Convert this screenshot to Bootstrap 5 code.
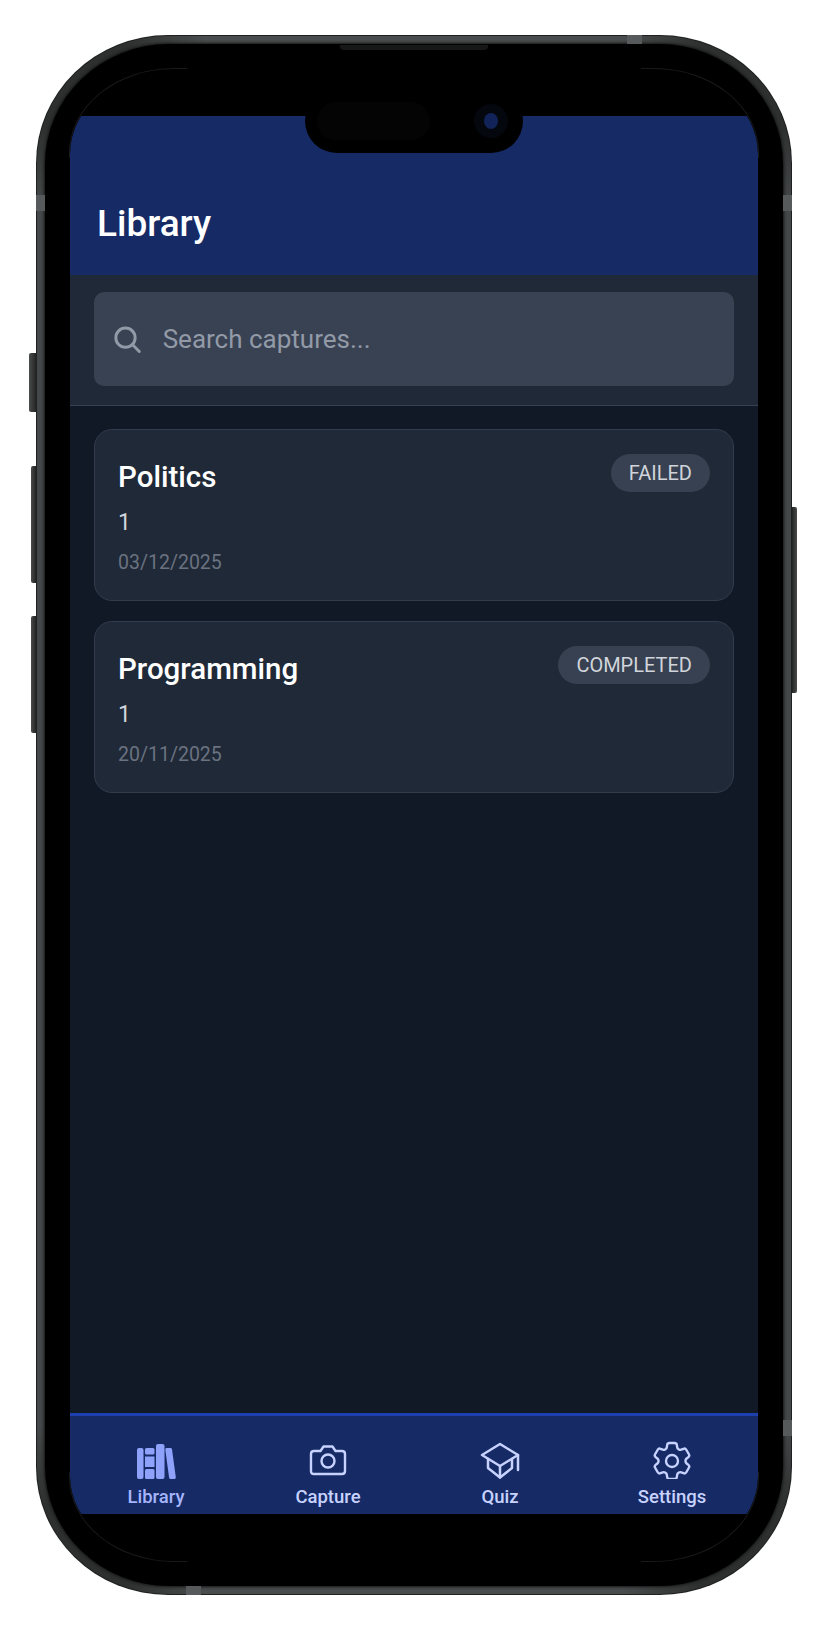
<!DOCTYPE html>
<html lang="en">
<head>
    <meta charset="UTF-8">
    <meta name="viewport" content="width=device-width, initial-scale=1.0">
    <title>Library</title>
    <link href="https://cdn.jsdelivr.net/npm/bootstrap@5.3.0/dist/css/bootstrap.min.css" rel="stylesheet">
    <style>
        html, body { height: 1631px; overflow: hidden; background: #fff; }
        body { font-family: Roboto, "Liberation Sans", sans-serif; padding: 35px 36px 0; }

        /* phone body: metal ring is lighter on the straight edges, darker round the corners */
        .phone-frame {
            position: relative; width: 756px; height: 1560px; padding: 9px;
            border-radius: 132px / 128px;
            background-color: #2e3030;
            background-image:
                linear-gradient(90deg, transparent 90px, #4a4d4d 170px, #4a4d4d 586px, transparent 666px),
                linear-gradient(180deg, transparent 90px, #454848 170px, #454848 1390px, transparent 1470px);
            box-shadow: inset 0 0 0 1px #1f2020;
        }
        .phone-bezel { height: 100%; padding: 25px; border-radius: 124px / 120px; background: #000; box-shadow: 0 0 3px 1px #141515; }
        .side-btn { position: absolute; background: linear-gradient(90deg, #4a4c4c, #232525); border-radius: 2px 0 0 2px; }
        .btn-action { left: -7px; top: 318px; width: 7px; height: 59px; }
        .btn-up { left: -5px; top: 431px; width: 5px; height: 117px; }
        .btn-down { left: -5px; top: 581px; width: 5px; height: 117px; }
        .btn-power { right: -5px; top: 472px; width: 5px; height: 186px; border-radius: 0 2px 2px 0; background: linear-gradient(90deg, #232525, #4a4c4c); }
        .band { position: absolute; background: #565a5a; }
        .band-l { left: 0; top: 160px; width: 9px; height: 16px; }
        .band-r { right: 0; top: 160px; width: 9px; height: 16px; }
        .band-t { left: 591px; top: 0; width: 15px; height: 9px; }
        .band-b { left: 150px; bottom: 0; width: 15px; height: 9px; }
        .band-rb { right: 0; top: 1385px; width: 9px; height: 16px; }
        .speaker { position: absolute; left: 304px; top: 10px; width: 148px; height: 5px; background: #161717; border-radius: 0 0 4px 4px; }

        /* screen */
        .phone-screen { width: 688px; height: 1492px; border-radius: 105px / 85px; overflow: hidden; background: #000; }
        .status-gap { height: 47px; background: #000; }
        .island { position: absolute; left: 269px; top: 54px; width: 218px; height: 64px; border-radius: 32px; background: #000; }
        .island-pill { width: 113px; height: 38px; margin-left: 12px; border-radius: 19px; background: #040404; }
        .island-cam { width: 34px; height: 34px; margin-right: 15px; border-radius: 50%; background: #05070e; }
        .island-lens { width: 14px; height: 16px; border-radius: 50%; background: #12235a; }
        .corner-arc { position: absolute; width: 118px; height: 90px; border: 0 solid #191919; }
        .arc-tl { left: 33px; top: 33px; border-width: 1px 0 0 1px; border-top-left-radius: 105px 85px; }
        .arc-tr { right: 33px; top: 33px; border-width: 1px 1px 0 0; border-top-right-radius: 105px 85px; }
        .arc-bl { left: 33px; bottom: 33px; border-width: 0 0 1px 1px; border-bottom-left-radius: 105px 85px; }
        .arc-br { right: 33px; bottom: 33px; border-width: 0 1px 1px 0; border-bottom-right-radius: 105px 85px; }

        .app-header { height: 159px; padding: 0 27px 29px; background: #162a66; }
        .app-title { font-size: 37px; font-weight: 500; line-height: 44px; color: #fff; margin: 0; }
        .search-bar { height: 131px; padding: 17px 24px 0; background: #1f2937; border-bottom: 1px solid #374151; }
        .search-box { height: 94px; padding: 0 20px; gap: 22px; border-radius: 10px; background: #394252; }
        .search-box .form-control { padding: 0; border: 0; border-radius: 0; background: transparent; box-shadow: none; color: #fff; font-size: 26px; }
        .search-box .form-control::placeholder { color: #929aa8; opacity: 1; }
        .capture-list { padding: 23px 24px 0; gap: 20px; background: #111927; }
        .capture-card { height: 172px; padding: 24px 23px; border: 1px solid #323c4c; border-radius: 18px; background: #1f2937; }
        .capture-title { font-size: 29.500px; font-weight: 500; line-height: 46px; color: #fff; margin: 0; }
        .capture-count { font-size: 23px; line-height: 32px; margin-top: 7px; color: #d1d5db; }
        .capture-date { font-size: 19.500px; line-height: 26px; margin-top: 11px; color: #6b7280; }
        .status-pill { padding: 0 18px; font-size: 20px; font-weight: 400; line-height: 38px; background: #374151; color: #d1d5db; }
        .tab-bar { height: 101px; background: #162a66; border-top: 3px solid #1e40af; }
        .tab-item { flex: 1 1 0; height: 100%; padding-top: 25px; color: #c7d2fe; font-size: 18.500px; font-weight: 500; line-height: 22px; text-decoration: none; }
        .tab-item.is-active { color: #a5b4fc; }
        .tab-icon { display: block; height: 38px; margin-bottom: 7px; }
    </style>
</head>
<body>
    <div class="phone-frame">
        <span class="side-btn btn-action"></span>
        <span class="side-btn btn-up"></span>
        <span class="side-btn btn-down"></span>
        <span class="side-btn btn-power"></span>
        <span class="band band-l"></span>
        <span class="band band-r"></span>
        <span class="band band-t"></span>
        <span class="band band-b"></span>
        <span class="band band-rb"></span>
        <span class="speaker"></span>

        <div class="phone-bezel">
        <div class="phone-screen d-flex flex-column">
            <div class="status-gap"></div>
            <header class="app-header d-flex align-items-end">
                <h1 class="app-title">Library</h1>
            </header>
            <div class="search-bar">
                <div class="search-box d-flex align-items-center">
                    <svg width="29" height="29" viewBox="0 0 29 29" fill="none" stroke="#929aa8" stroke-width="3.200" stroke-linecap="round">
                        <circle cx="12.500" cy="12.500" r="10.500"/>
                        <path d="M20 20l7.500 7.500"/>
                    </svg>
                    <input type="text" class="form-control" placeholder="Search captures...">
                </div>
            </div>
            <main class="capture-list d-flex flex-column flex-grow-1">
                <div class="card capture-card">
                    <div class="d-flex justify-content-between align-items-start">
                        <h2 class="capture-title">Politics</h2>
                        <span class="badge rounded-pill status-pill">FAILED</span>
                    </div>
                    <div class="capture-count">1</div>
                    <div class="capture-date">03/12/2025</div>
                </div>
                <div class="card capture-card">
                    <div class="d-flex justify-content-between align-items-start">
                        <h2 class="capture-title">Programming</h2>
                        <span class="badge rounded-pill status-pill">COMPLETED</span>
                    </div>
                    <div class="capture-count">1</div>
                    <div class="capture-date">20/11/2025</div>
                </div>
            </main>
            <nav class="tab-bar d-flex">
                <a href="#" class="tab-item is-active d-flex flex-column align-items-center">
                    <svg class="tab-icon" width="40" height="38" viewBox="0 0 40 38" fill="#8ea2fb">
                        <rect x="1" y="7" width="6.500" height="31" rx="2"/>
                        <rect x="9" y="7" width="9.500" height="6.500" rx="1.500"/>
                        <rect x="9" y="15.500" width="9.500" height="10.500"/>
                        <rect x="9" y="28" width="9.500" height="10" rx="1.500"/>
                        <rect x="20" y="3" width="8.500" height="35" rx="2"/>
                        <path d="M30.500 7h4q1.300 0 1.500 1.300l3.800 28q.1 1.700-1.200 1.700h-4q-1.300 0-1.500-1.300l-3.800-28q-.2-1.700 1.200-1.700z"/>
                    </svg>
                    Library
                </a>
                <a href="#" class="tab-item d-flex flex-column align-items-center">
                    <svg class="tab-icon" width="38" height="38" viewBox="0 0 38 38" fill="none" stroke="#c7d2fe" stroke-width="2.400" stroke-linejoin="round">
                        <path d="M5 10h6.500l3-4.500h9l3 4.500H33q3 0 3 3v17q0 3-3 3H5q-3 0-3-3V13q0-3 3-3z"/>
                        <circle cx="19" cy="20" r="6.500"/>
                    </svg>
                    Capture
                </a>
                <a href="#" class="tab-item d-flex flex-column align-items-center">
                    <svg class="tab-icon" width="40" height="38" viewBox="0 0 40 38" fill="none" stroke="#c7d2fe" stroke-width="2.500" stroke-linecap="round" stroke-linejoin="round">
                        <path d="M2 14L20 3l18 11-18 11z"/>
                        <path d="M8 18v9l12 9.500 12-9.500v-9"/>
                        <path d="M20 25v11.500"/>
                        <path d="M38 14v15"/>
                    </svg>
                    Quiz
                </a>
                <a href="#" class="tab-item d-flex flex-column align-items-center">
                    <svg class="tab-icon" width="38" height="38" viewBox="2.500 2 19 19" fill="none" stroke="#c7d2fe" stroke-width="1.200" stroke-linecap="round" stroke-linejoin="round">
                        <path d="M9.594 3.940c.09-.542.56-.94 1.110-.94h2.593c.55 0 1.020.398 1.110.94l.213 1.281c.063.374.313.686.645.870.074.04.147.083.22.127.325.196.72.257 1.075.124l1.217-.456a1.125 1.125 0 0 1 1.370.49l1.296 2.247a1.125 1.125 0 0 1-.26 1.431l-1.003.827c-.293.241-.438.613-.43.992a7.723 7.723 0 0 1 0 .255c-.008.378.137.75.43.991l1.004.827c.424.35.534.955.26 1.430l-1.298 2.247a1.125 1.125 0 0 1-1.369.491l-1.217-.456c-.355-.133-.75-.072-1.076.124a6.470 6.470 0 0 1-.22.128c-.331.183-.581.495-.644.869l-.213 1.281c-.09.543-.56.94-1.110.94h-2.594c-.55 0-1.019-.398-1.110-.94l-.213-1.281c-.062-.374-.312-.686-.644-.87a6.520 6.520 0 0 1-.22-.127c-.325-.196-.72-.257-1.076-.124l-1.217.456a1.125 1.125 0 0 1-1.369-.49l-1.297-2.247a1.125 1.125 0 0 1 .26-1.431l1.004-.827c.292-.24.437-.613.43-.991a6.932 6.932 0 0 1 0-.255c.007-.38-.138-.751-.43-.992l-1.004-.827a1.125 1.125 0 0 1-.26-1.430l1.297-2.247a1.125 1.125 0 0 1 1.370-.491l1.216.456c.356.133.751.072 1.076-.124.072-.044.146-.086.22-.128.332-.183.582-.495.644-.869l.214-1.280Z"/>
                        <path d="M15 12a3 3 0 1 1-6 0 3 3 0 0 1 6 0Z"/>
                    </svg>
                    Settings
                </a>
            </nav>
            <div class="status-gap"></div>
        </div>
        </div>

        <span class="corner-arc arc-tl"></span>
        <span class="corner-arc arc-tr"></span>
        <span class="corner-arc arc-bl"></span>
        <span class="corner-arc arc-br"></span>

        <div class="island d-flex align-items-center justify-content-between">
            <div class="island-pill"></div>
            <div class="island-cam d-flex align-items-center justify-content-center">
                <div class="island-lens"></div>
            </div>
        </div>
    </div>

    <script src="https://cdn.jsdelivr.net/npm/bootstrap@5.3.0/dist/js/bootstrap.bundle.min.js"></script>
</body>
</html>
